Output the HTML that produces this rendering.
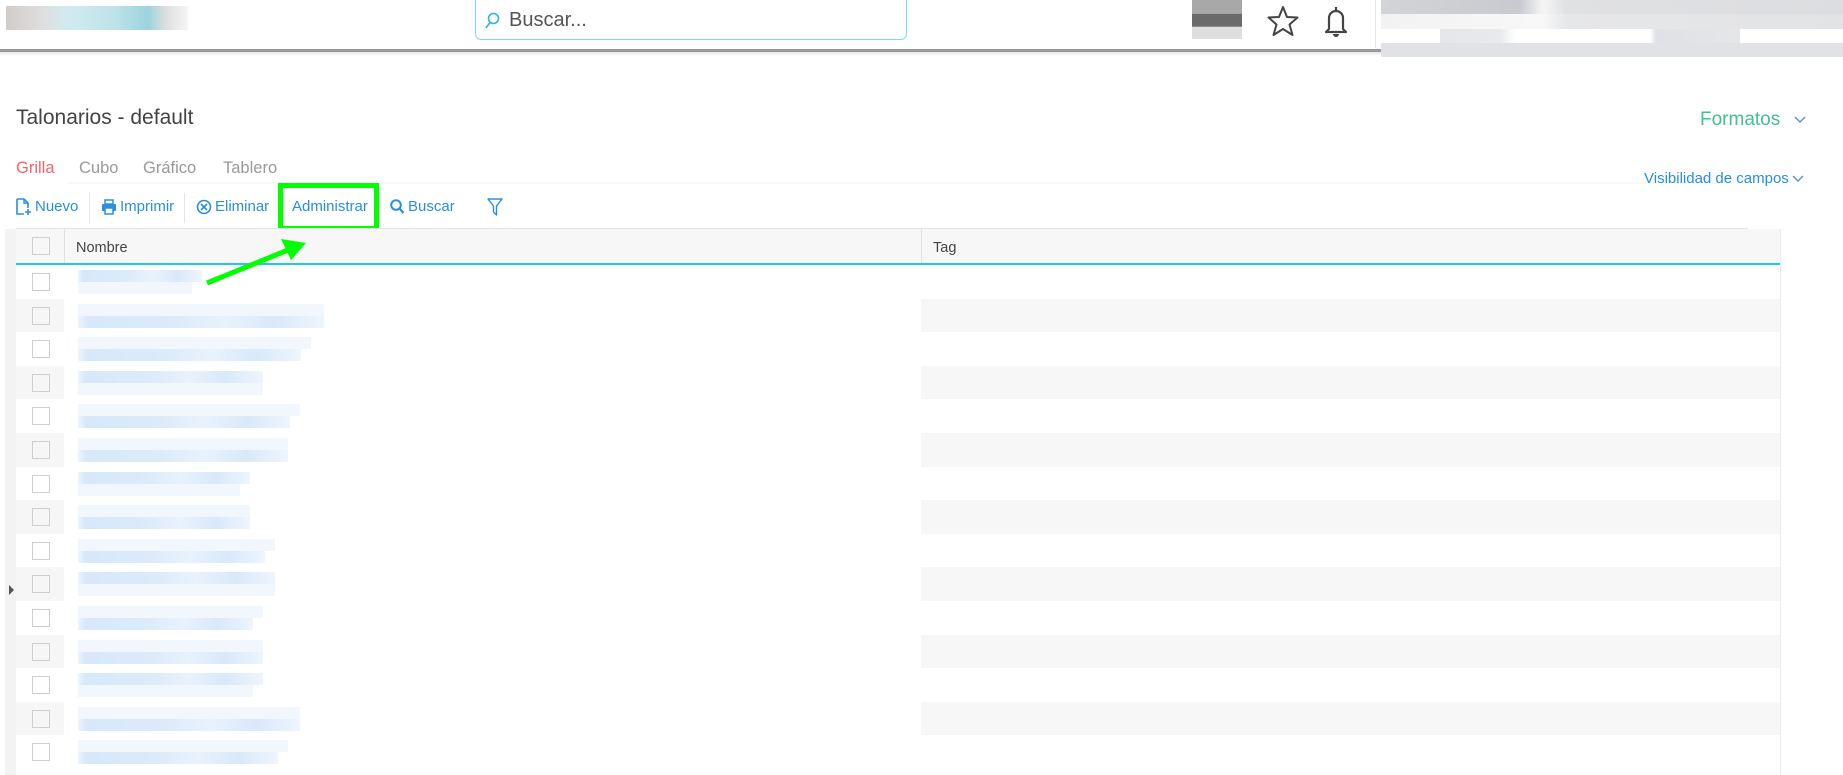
<!DOCTYPE html>
<html><head><meta charset="utf-8">
<style>
*{box-sizing:border-box;margin:0;padding:0}
body{width:1843px;height:775px;overflow:hidden;background:#fff;font-family:"Liberation Sans",sans-serif;position:relative}
.abs{position:absolute}
.tb{position:absolute;top:198px;font-size:15px;color:#2b8fe0;white-space:nowrap}
.row{position:absolute;left:16px;width:1764px;height:33.6px}
.row .cb{position:absolute;left:16px;top:8px;width:18px;height:18px;border:1.5px solid #cfcfcf;background:#fff}
.g .c1{position:absolute;left:0;top:0;width:48px;height:100%;background:#f6f6f6}
.g .c3{position:absolute;left:905px;top:0;right:0;height:100%;background:#f7f7f7}
.g .cb{background:#f6f6f6}
.bl1{position:absolute;left:62px;height:12px;background:#f2f7fd}
.bl2{position:absolute;left:62px;height:12px;background:linear-gradient(90deg,#eef5fd 0,#d6e8fa 4%,#dcebfa 40%,#e8f2fc 60%,#d8e9fa 80%,#eef5fd 100%)}
</style></head><body>
<div class="abs" style="left:6px;top:6px;width:182px;height:24px;background:linear-gradient(90deg,#c9c3c0 0,#d8d8d8 20%,#c8e8ee 35%,#b2dde5 60%,#8ccbd8 78%,#d9d9d9 88%,#f4f4f4 100%);opacity:.85"></div>
<div class="abs" style="left:475px;top:0;width:432px;height:40px;border:1px solid #7fdcf0;border-top:none;border-radius:0 0 6px 6px"></div>
<svg class="abs" style="left:484px;top:12px" width="16" height="18" viewBox="0 0 16 18"><circle cx="9.5" cy="6.5" r="5" fill="none" stroke="#2bb5e0" stroke-width="1.6"/><path d="M6 10.5L2 16" stroke="#2bb5e0" stroke-width="1.6"/></svg>
<div class="abs" style="left:509px;top:9px;font-size:20px;color:#555">Buscar...</div>
<div class="abs" style="left:1192px;top:0;width:50px;height:39px;background:linear-gradient(180deg,#a8a8a8 0,#a8a8a8 35%,#6a6a6a 36%,#6a6a6a 68%,#dedede 69%);"></div>
<svg class="abs" style="left:1266px;top:5px" width="34" height="32" viewBox="0 0 34 32"><path d="M17 2l4 10 10.5.5-8 7 3 10.5L17 24l-9.5 6 3-10.5-8-7L13 12z" fill="none" stroke="#444" stroke-width="2" stroke-linejoin="round"/></svg>
<svg class="abs" style="left:1322px;top:5px" width="28" height="33" viewBox="0 0 28 33"><path d="M14 2v3M7 24V13a7 7 0 0 1 14 0v11l3 3H4z" fill="none" stroke="#444" stroke-width="2.2" stroke-linejoin="round"/><path d="M11 29a3 3 0 0 0 6 0z" fill="#444"/></svg>
<div class="abs" style="left:1375px;top:0;width:1px;height:48px;background:#e8e8e8"></div>
<div class="abs" style="left:0;top:49px;width:1381px;height:3px;background:#9a9a9e"></div>
<div class="abs" style="left:0;top:52px;width:1381px;height:4px;background:linear-gradient(#e6e6e6,#fff)"></div>
<div class="abs" style="left:1381px;top:0;width:462px;height:14px;background:linear-gradient(90deg,#d3d4d8 0,#c9cacf 30%,#f5f5f5 35%,#e0e1e3 40%,#dcdde0 100%)"></div>
<div class="abs" style="left:1381px;top:14px;width:462px;height:15px;background:linear-gradient(90deg,#f2f2f2 0,#f8f8f8 35%,#e6e7e9 40%,#e2e3e5 100%)"></div>
<div class="abs" style="left:1440px;top:29px;width:300px;height:14px;background:linear-gradient(90deg,#e6e7e9 0,#e8e9eb 20%,#fff 25%,#fff 70%,#e0e1e4 72%,#e5e6e8 100%)"></div>
<div class="abs" style="left:1381px;top:43px;width:462px;height:14px;background:#e1e2e5"></div>

<div class="abs" style="left:16px;top:106px;font-size:21px;color:#444">Talonarios - default</div>
<div class="abs" style="left:1700px;top:109px;font-size:19px;color:#44c08e">Formatos</div>
<svg class="abs" style="left:1794px;top:116px" width="12" height="8" viewBox="0 0 12 8"><path d="M1 1l5 5 5-5" fill="none" stroke="#5a8fd0" stroke-width="1.4"/></svg>
<div class="abs" style="left:16px;top:159px;font-size:16.5px;color:#f0656f">Grilla</div>
<div class="abs" style="left:79px;top:159px;font-size:16.5px;color:#9a9a9a">Cubo</div>
<div class="abs" style="left:143px;top:159px;font-size:16.5px;color:#9a9a9a">Gráfico</div>
<div class="abs" style="left:223px;top:159px;font-size:16.5px;color:#9a9a9a">Tablero</div>
<div class="abs" style="left:68px;top:182px;width:1680px;height:2px;background:#f8f8f8"></div>
<div class="abs" style="left:1644px;top:170px;font-size:15px;color:#2b8fe0">Visibilidad de campos</div>
<svg class="abs" style="left:1792px;top:175px" width="12" height="8" viewBox="0 0 12 8"><path d="M1 1l5 5 5-5" fill="none" stroke="#5a8fd0" stroke-width="1.4"/></svg>
<svg class="abs" style="left:16px;top:198px" width="16" height="18" viewBox="0 0 16 18"><path d="M1 1h7l4 4v5M1 1v15h7" fill="none" stroke="#2b8fe0" stroke-width="1.6"/><path d="M8 1v4h4" fill="none" stroke="#2b8fe0" stroke-width="1.4"/><path d="M12 11v6M9 14h6" stroke="#2b8fe0" stroke-width="1.6"/></svg>
<div class="tb" style="left:35px">Nuevo</div>
<div class="abs" style="left:89px;top:193px;width:1px;height:30px;background:#e6e6e6"></div>
<svg class="abs" style="left:101px;top:199px" width="16" height="16" viewBox="0 0 16 16"><rect x="4" y="1" width="8" height="4" fill="none" stroke="#2b8fe0" stroke-width="1.5"/><rect x="1" y="5" width="14" height="7" rx="1" fill="#2b8fe0"/><rect x="4" y="9" width="8" height="6" fill="#fff" stroke="#2b8fe0" stroke-width="1.5"/></svg>
<div class="tb" style="left:120px">Imprimir</div>
<div class="abs" style="left:184px;top:193px;width:1px;height:30px;background:#e6e6e6"></div>
<svg class="abs" style="left:196px;top:199px" width="16" height="16" viewBox="0 0 16 16"><circle cx="8" cy="8" r="6.5" fill="none" stroke="#2b8fe0" stroke-width="1.6"/><path d="M5 5l6 6M11 5l-6 6" stroke="#2b8fe0" stroke-width="1.6"/></svg>
<div class="tb" style="left:215px">Eliminar</div>
<div class="tb" style="left:292px">Administrar</div>
<div class="abs" style="left:278px;top:183px;width:101px;height:48px;border:5px solid #00ff00"></div>
<svg class="abs" style="left:390px;top:199px" width="15" height="16" viewBox="0 0 15 16"><circle cx="6" cy="6" r="4.8" fill="none" stroke="#2b8fe0" stroke-width="2"/><path d="M9.5 9.5l4 4.5" stroke="#2b8fe0" stroke-width="2.2"/></svg>
<div class="tb" style="left:408px">Buscar</div>
<svg class="abs" style="left:487px;top:198px" width="16" height="18" viewBox="0 0 16 18"><path d="M1 1h14L9.5 8v9L6.5 14V8z" fill="none" stroke="#2b8fe0" stroke-width="1.4" stroke-linejoin="round"/></svg>
<div class="abs" style="left:16px;top:228px;width:1732px;height:1px;background:#e4e4e4"></div>

<div class="abs" style="left:5px;top:229px;width:11px;height:546px;background:#f3f3f3"></div>
<div class="abs" style="left:9px;top:585px;width:0;height:0;border-left:5px solid #555;border-top:5px solid transparent;border-bottom:5px solid transparent"></div>
<div class="abs" style="left:16px;top:229px;width:1764px;height:34px;background:#f7f7f7"></div>
<div class="abs" style="left:32px;top:237px;width:18px;height:18px;border:1.5px solid #cfcfcf;background:#f7f7f7"></div>
<div class="abs" style="left:64px;top:229px;width:1px;height:34px;background:#e2e2e2"></div>
<div class="abs" style="left:921px;top:229px;width:1px;height:34px;background:#e2e2e2"></div>
<div class="abs" style="left:76px;top:240px;font-size:14.5px;color:#444">Nombre</div>
<div class="abs" style="left:933px;top:240px;font-size:14.5px;color:#444">Tag</div>
<div class="abs" style="left:16px;top:263px;width:1764px;height:2px;background:#1ec8f0"></div>
<div class="abs" style="left:1780px;top:229px;width:1px;height:546px;background:#ececec"></div>
<div id="rows"></div>
<svg class="abs" style="left:0;top:0;pointer-events:none" width="1843" height="775"><path d="M207 283L288 250" stroke="#00ff00" stroke-width="5"/><path d="M306 243L281 239L291 260z" fill="#00ff00"/></svg>
<script>
var w=[202,324,311,263,300,288,250,250,275,275,263,263,263,300,288];
var h='';
for(var i=0;i<15;i++){
 var t=265+i*33.6, ww=w[i]-78;
 h+='<div class="row'+(i%2?' g':'')+'" style="top:'+t+'px"><div class="c1"></div><div class="c3"></div><div class="cb"></div>'+
 '<div class="bl'+(i%3==0?'2':'1')+'" style="top:5px;width:'+ww+'px"></div><div class="bl'+(i%3==0?'1':'2')+'" style="top:17px;width:'+(ww-(i%2?0:10))+'px"></div></div>';
}
document.getElementById('rows').innerHTML=h;
</script>
</body></html>
